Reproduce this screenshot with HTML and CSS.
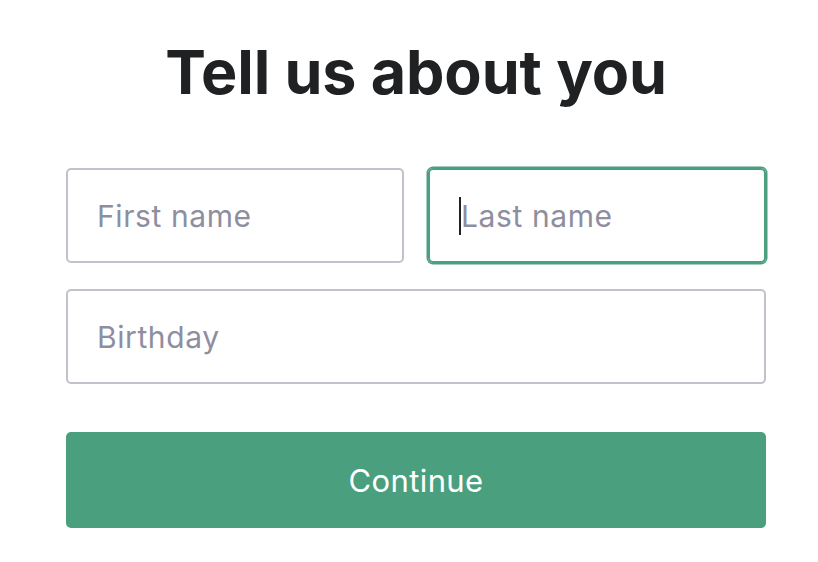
FILE: index.html
```html
<!DOCTYPE html>
<html lang="en">
<head>
    <meta charset="UTF-8">
    <meta name="viewport" content="width=device-width, initial-scale=1.0">
    <title>Tell us about you</title>
    <link rel="stylesheet" href="styles.css">
</head>
<body>

<div class="page">
    <div class="form-box">
        <h1>Tell us about you</h1>

        <!-- name fields -->
        <div class="row two">
            <div class="field"><span class="placeholder">First name</span></div>
            <div class="field focused"><span class="caret"></span><span class="placeholder">Last name</span></div>
        </div>
        <div class="row">
            <div class="field"><span class="placeholder">Birthday</span></div>
        </div>

        <button class="continue">Continue</button>
    </div>
</div>

</body>
</html>
```

FILE: styles.css
```css
body {
    margin: 0;
    padding: 0;
    background-color: #fff;
    font-family: Inter, "Noto Sans", sans-serif;
}
.page {
    padding-left: 14px;
}
.form-box {
    width: 700px;
    margin: 0 auto;
    padding-top: 28px;
}
h1 {
    margin: 0 0 52px;
    text-align: center;
    font-size: 61px;
    font-weight: 700;
    line-height: 88px;
    color: #202123;
    letter-spacing: -0.1px;
}
.row {
    display: flex;
    gap: 24px;
    margin-bottom: 26px;
}
.field {
    flex: 1;
    box-sizing: border-box;
    height: 95px;
    border: 2px solid #c2c1cc;
    border-radius: 5px;
    padding: 0 29px;
    display: flex;
    align-items: center;
    position: relative;
}
.field.focused {
    border-color: #4a9f7e;
    box-shadow: 0 0 0 1.5px #4a9f7e;
}
.placeholder {
    font-size: 30px;
    letter-spacing: 0.6px;
    color: #8e8ea0;
}
.caret {
    width: 2px;
    height: 38px;
    background-color: #202123;
}
.continue {
    display: block;
    width: 100%;
    height: 96px;
    margin-top: 48px;
    border: none;
    border-radius: 5px;
    background-color: #4a9f7e;
    color: #fff;
    font-family: Inter, "Noto Sans", sans-serif;
    font-size: 31px;
    letter-spacing: 0.4px;
}
```
